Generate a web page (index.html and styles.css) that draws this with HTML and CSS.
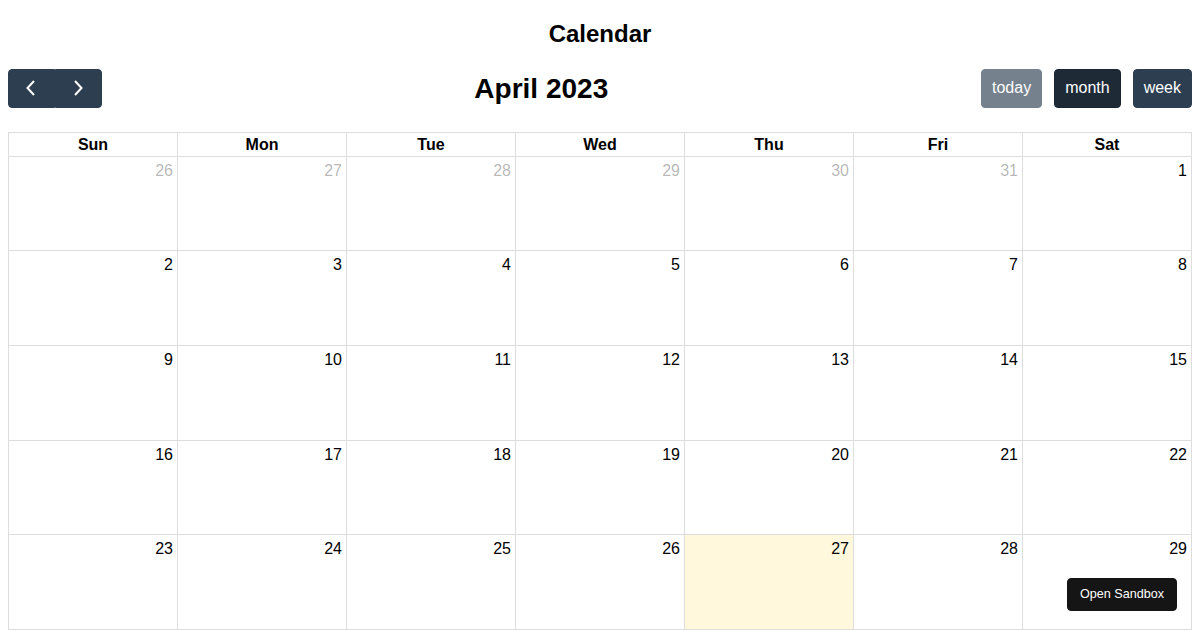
FILE: index.html
```html
<!DOCTYPE html>
<html lang="en">
<head>
<meta charset="utf-8">
<title>Calendar</title>
<link rel="stylesheet" href="styles.css">
</head>
<body>
<h2 class="page-title">Calendar</h2>
<div class="toolbar">
  <div class="btn-group">
    <button class="btn btn-icon" aria-label="prev">
      <svg width="24" height="24" viewBox="0 0 24 24"><path d="M15 5 L8.5 12 L15 19" fill="none" stroke="#fff" stroke-width="2"/></svg>
    </button>
    <button class="btn btn-icon" aria-label="next">
      <svg width="24" height="24" viewBox="0 0 24 24"><path d="M9 5 L15.5 12 L9 19" fill="none" stroke="#fff" stroke-width="2"/></svg>
    </button>
  </div>
  <h2 class="toolbar-title">April 2023</h2>
  <div class="toolbar-right">
    <button class="btn btn-single btn-disabled">today</button>
    <button class="btn btn-single btn-active">month</button>
    <button class="btn btn-single">week</button>
  </div>
</div>
<div class="grid">
  <div class="head">Sun</div><div class="head">Mon</div><div class="head">Tue</div><div class="head">Wed</div><div class="head">Thu</div><div class="head">Fri</div><div class="head">Sat</div>
  <div class="day other">26</div><div class="day other">27</div><div class="day other">28</div><div class="day other">29</div><div class="day other">30</div><div class="day other">31</div><div class="day">1</div>
  <div class="day">2</div><div class="day">3</div><div class="day">4</div><div class="day">5</div><div class="day">6</div><div class="day">7</div><div class="day">8</div>
  <div class="day">9</div><div class="day">10</div><div class="day">11</div><div class="day">12</div><div class="day">13</div><div class="day">14</div><div class="day">15</div>
  <div class="day">16</div><div class="day">17</div><div class="day">18</div><div class="day">19</div><div class="day">20</div><div class="day">21</div><div class="day">22</div>
  <div class="day">23</div><div class="day">24</div><div class="day">25</div><div class="day">26</div><div class="day today">27</div><div class="day">28</div><div class="day">29</div>
</div>
<button class="sandbox">Open Sandbox</button>
</body>
</html>
```
FILE: styles.css
```css
html, body {
  margin: 0;
  padding: 0;
}
body {
  padding: 20px 8px 0;
  font-family: "Liberation Sans", Arial, sans-serif;
  color: #000;
  background: #fff;
}
.page-title {
  font-size: 24px;
  font-weight: bold;
  text-align: center;
  margin: 0 0 21px;
  line-height: 28px;
}
.toolbar {
  display: flex;
  justify-content: space-between;
  align-items: center;
  margin-bottom: 24px;
}
.toolbar-title {
  margin: 0;
  padding-top: 2px;
  font-size: 28px;
  font-weight: bold;
  line-height: 32px;
}
.btn-group {
  display: flex;
}
.toolbar-right {
  display: flex;
  gap: 12px;
}
.btn {
  font-family: "Liberation Sans", Arial, sans-serif;
  font-size: 16px;
  line-height: 24px;
  color: #fff;
  background: #2c3e50;
  border: 1px solid #2c3e50;
  padding: 6.4px 10.4px;
  border-radius: 4px;
  cursor: pointer;
}
.btn-icon {
  display: flex;
  align-items: center;
  justify-content: center;
}
.btn-icon svg {
  display: block;
}
.btn-group .btn-icon:first-child {
  border-radius: 4px 0 0 4px;
}
.btn-group .btn-icon:last-child {
  border-radius: 0 4px 4px 0;
}
.btn-single {
  padding: 6.4px 10px;
}
.btn-disabled {
  opacity: 0.65;
}
.btn-active {
  background: #1e2b37;
  border-color: #1a252f;
}
.grid {
  display: grid;
  grid-template-columns: repeat(7, 1fr);
  grid-template-rows: 24px repeat(5, 94.6px);
  border-top: 1px solid #ddd;
  border-left: 1px solid #ddd;
}
.head, .day {
  border-right: 1px solid #ddd;
  border-bottom: 1px solid #ddd;
}
.head {
  font-weight: bold;
  font-size: 16px;
  text-align: center;
  line-height: 23px;
}
.day {
  font-size: 16px;
  text-align: right;
  padding: 5px 4px 0 0;
  line-height: 18px;
}
.day.other {
  color: rgba(0, 0, 0, 0.3);
}
.day.today {
  background: #fff8dc;
}
.sandbox {
  position: fixed;
  right: 23px;
  bottom: 19px;
  background: #151515;
  color: #fff;
  border: 1px solid #151515;
  border-radius: 4px;
  font-family: "Liberation Sans", Arial, sans-serif;
  font-size: 12.6px;
  padding: 8px 12px;
  line-height: 15px;
  cursor: pointer;
}
```
